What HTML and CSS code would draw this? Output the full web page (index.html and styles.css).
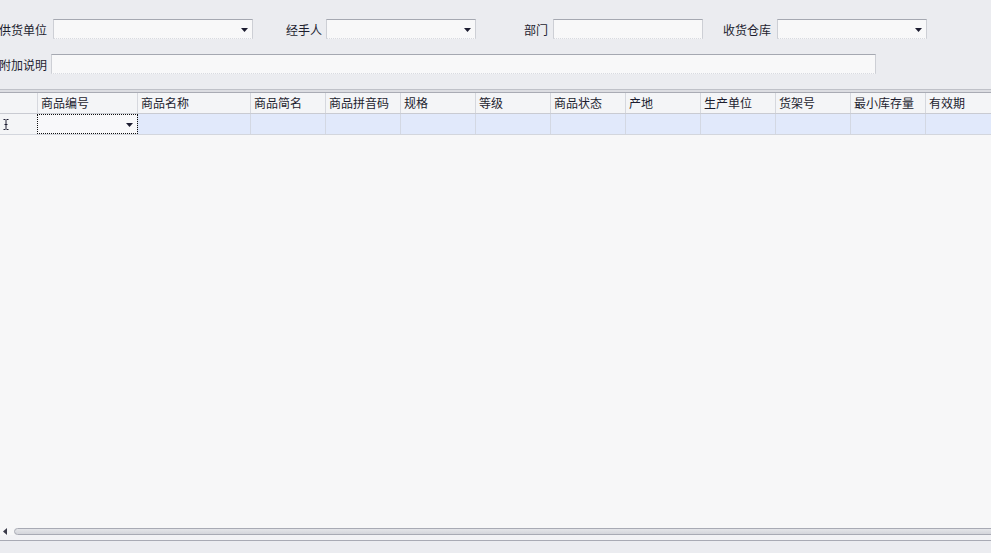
FILE: index.html
```html
<!DOCTYPE html>
<html lang="zh">
<head>
<meta charset="utf-8">
<title>进货单</title>
<link rel="stylesheet" href="styles.css">
</head>
<body>
<div class="app">
  <div class="form">
    <div class="form-row row1">
      <label class="lbl l1">供货单位</label>
      <div class="field combo w200"><svg class="arrow" width="7" height="4" viewBox="0 0 7 4"><polygon points="0,0 7,0 3.5,4" fill="#1c1c30"/></svg></div>
      <label class="lbl l2">经手人</label>
      <div class="field combo w150"><svg class="arrow" width="7" height="4" viewBox="0 0 7 4"><polygon points="0,0 7,0 3.5,4" fill="#1c1c30"/></svg></div>
      <label class="lbl l3">部门</label>
      <div class="field w150"></div>
      <label class="lbl l4">收货仓库</label>
      <div class="field combo w150"><svg class="arrow" width="7" height="4" viewBox="0 0 7 4"><polygon points="0,0 7,0 3.5,4" fill="#1c1c30"/></svg></div>
    </div>
    <div class="form-row row2">
      <label class="lbl l5">附加说明</label>
      <div class="field w825"></div>
    </div>
  </div>
  <div class="sep-top"></div>
  <div class="grid">
    <div class="grid-row head">
      <div class="cell ind"></div>
      <div class="cell c100">商品编号</div>
      <div class="cell c113">商品名称</div>
      <div class="cell c75">商品简名</div>
      <div class="cell c75">商品拼音码</div>
      <div class="cell c75">规格</div>
      <div class="cell c75">等级</div>
      <div class="cell c75">商品状态</div>
      <div class="cell c75">产地</div>
      <div class="cell c75">生产单位</div>
      <div class="cell c75">货架号</div>
      <div class="cell c75">最小库存量</div>
      <div class="cell c75">有效期</div>
    </div>
    <div class="grid-row data">
      <div class="cell ind"><svg width="6" height="11" viewBox="0 0 6 11"><path d="M0.5 0.5h2M3.5 0.5h2M3 1v9M0.5 10.5h2M3.5 10.5h2M1.5 5.5h3" stroke="#1c1c30" stroke-width="1" fill="none"/></svg></div>
      <div class="cell c100 focus"><svg class="arrow" width="7" height="4" viewBox="0 0 7 4"><polygon points="0,0 7,0 3.5,4" fill="#1c1c30"/></svg></div>
      <div class="cell c113"></div>
      <div class="cell c75"></div>
      <div class="cell c75"></div>
      <div class="cell c75"></div>
      <div class="cell c75"></div>
      <div class="cell c75"></div>
      <div class="cell c75"></div>
      <div class="cell c75"></div>
      <div class="cell c75"></div>
      <div class="cell c75"></div>
      <div class="cell c75"></div>
    </div>
    <div class="grid-body"></div>
    <div class="hscroll">
      <svg class="larrow" width="4" height="7" viewBox="0 0 4 7"><polygon points="4,0 4,7 0,3.5" fill="#3a3a4a"/></svg>
      <div class="thumb"></div>
    </div>
    <div class="hscroll-gap"></div>
  </div>
  <div class="footer"></div>
</div>
</body>
</html>
```
FILE: styles.css
```css
* { box-sizing: border-box; }
html, body { margin: 0; padding: 0; }
body {
  width: 991px;
  height: 553px;
  overflow: hidden;
  font-family: "Noto Sans CJK SC", "Noto Sans", sans-serif;
  font-size: 12px;
  color: #1d1d2f;
  background: #ebecf0;
}
.app {
  display: flex;
  flex-direction: column;
  height: 553px;
}
.form {
  height: 89px;
  background: #ebecf0;
  padding-top: 19px;
  flex: none;
}
.form-row {
  display: flex;
  align-items: center;
  height: 20px;
  white-space: nowrap;
}
.row2 { margin-top: 15px; }
.lbl {
  display: block;
  text-align: right;
  line-height: 20px;
  flex: none;
  padding-top: 1px;
}
.l1 { width: 48px; margin-left: -1px; margin-right: 6px; }
.l2 { width: 69px; margin-right: 4px; }
.l3 { width: 72px; margin-right: 5px; }
.l4 { width: 68px; margin-right: 6px; }
.l5 { width: 48px; margin-left: -1px; margin-right: 4px; }
.field {
  height: 20px;
  flex: none;
  background: #f8f8f9;
  border-top: 1px solid #a5a8b1;
  border-left: 1px solid #cdcfd5;
  border-right: 1px solid #cdcfd5;
  border-bottom: 1px dotted #d8dae0;
  position: relative;
  display: flex;
  align-items: center;
  justify-content: flex-end;
  padding-right: 4px;
}
.w200 { width: 200px; }
.w150 { width: 150px; }
.w825 { width: 825px; }
.arrow { display: block; margin-top: 1px; }
.sep-top {
  flex: none;
  height: 4px;
  border-top: 1px solid #bfc1c8;
  border-bottom: 1px solid #a9abb4;
  background: #dcdde2;
}
.grid {
  flex: 1;
  display: flex;
  flex-direction: column;
  background: #f7f7f8;
  overflow: hidden;
}
.grid-row {
  display: flex;
  flex: none;
  height: 21px;
  border-bottom: 1px solid #c9cbd2;
}
.head { background: #f4f5f7; }
.data { background: #e1e9fb; border-bottom-color: #d3d6dd; }
.cell {
  flex: none;
  height: 20px;
  line-height: 20px;
  padding-left: 3px;
  border-right: 1px solid #d6d8de;
  white-space: nowrap;
  overflow: hidden;
}
.head .cell { color: #1d1d2f; }
.data .cell { border-right-color: #d3d8e3; }
.ind { width: 38px; background: #f4f5f7; }
.data .ind {
  display: flex;
  align-items: center;
  padding-left: 3px;
  padding-top: 1px;
}
.c100 { width: 100px; }
.c113 { width: 113px; }
.c75 { width: 75px; }
.focus {
  background: #f8f8fa;
  outline: 1px dotted #111;
  outline-offset: -1px;
  display: flex;
  align-items: center;
  justify-content: flex-end;
  padding-right: 4px;
  margin-left: -1px;
  width: 101px;
}
.grid-body { flex: 1; }
.hscroll {
  flex: none;
  height: 7px;
  display: flex;
  align-items: center;
  position: relative;
}
.larrow { display: block; margin-left: 3px; margin-right: 7px; }
.thumb {
  flex: 1;
  height: 7px;
  margin-right: -20px;
  border: 1px solid #a8aab4;
  border-radius: 4px;
  background: linear-gradient(#e4e5e9, #d4d5db);
}
.hscroll-gap {
  flex: none;
  height: 5px;
  background: #f2f2f5;
}
.footer {
  flex: none;
  height: 13px;
  border-top: 1px solid #a8aab4;
  background: #ebecf0;
}
```
